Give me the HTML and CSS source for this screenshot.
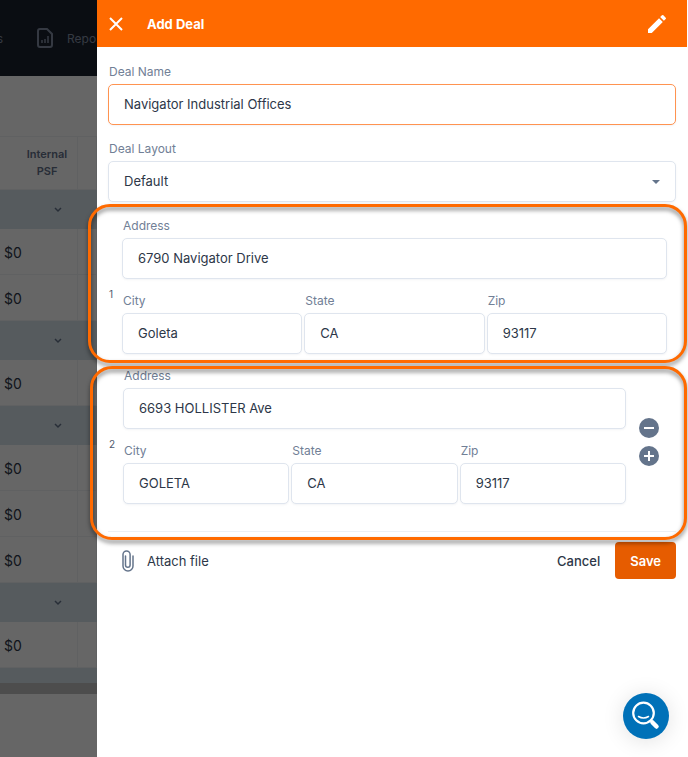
FILE: index.html
```
<!DOCTYPE html>
<html lang="en">
<head>
  <meta charset="UTF-8" />
  <meta name="viewport" content="width=device-width, initial-scale=1.0"/>
  <title>Add Deal</title>
  <link rel="stylesheet" href="styles.css">
</head>
<body>

  <!-- Page behind the drawer -->
  <div class="page">
    <nav class="top-nav">
      <a href="#" class="nav-cut">s</a>
      <a href="#" class="nav-link">
        <svg width="16" height="20" viewBox="0 0 16 20" fill="none" stroke="currentColor" stroke-width="2">
          <path d="M3 1h7l5 5v11a2 2 0 0 1-2 2H3a2 2 0 0 1-2-2V3a2 2 0 0 1 2-2z"/>
          <path d="M5 15v-3M8 15v-4M11 15V8" stroke-width="1.5"/>
        </svg>
        Repo
      </a>
    </nav>
    <table class="deals">
      <thead>
        <tr><th>Internal<br>PSF</th><th></th></tr>
      </thead>
      <tbody>
        <tr class="band"><td colspan="2"><svg class="chevron" viewBox="0 0 8 6"><path d="M1 1l3 3 3-3"/></svg></td></tr>
        <tr><td>$0</td><td></td></tr>
        <tr><td>$0</td><td></td></tr>
        <tr class="band"><td colspan="2"><svg class="chevron" viewBox="0 0 8 6"><path d="M1 1l3 3 3-3"/></svg></td></tr>
        <tr><td>$0</td><td></td></tr>
        <tr class="band"><td colspan="2"><svg class="chevron" viewBox="0 0 8 6"><path d="M1 1l3 3 3-3"/></svg></td></tr>
        <tr><td>$0</td><td></td></tr>
        <tr><td>$0</td><td></td></tr>
        <tr><td>$0</td><td></td></tr>
        <tr class="band"><td colspan="2"><svg class="chevron" viewBox="0 0 8 6"><path d="M1 1l3 3 3-3"/></svg></td></tr>
        <tr><td>$0</td><td></td></tr>
      </tbody>
    </table>
    <div class="band-end"></div>
    <div class="scrollbar"></div>
  </div>

  <!-- Add Deal drawer -->
  <main class="drawer">
    <header>
      <button type="button" class="icon-btn" aria-label="Close">
        <svg width="14" height="14" viewBox="0 0 14 14" fill="none" stroke="#fff" stroke-width="2"><path d="M1 1l12 12M13 1L1 13"/></svg>
      </button>
      <h1>Add Deal</h1>
      <button type="button" class="icon-btn" aria-label="Edit">
        <svg width="24" height="24" viewBox="0 0 24 24" fill="#fff"><path d="M3 17.25V21h3.75L17.81 9.94l-3.75-3.75L3 17.25zM20.71 7.04a1 1 0 0 0 0-1.41l-2.34-2.34a1 1 0 0 0-1.41 0l-1.83 1.83 3.75 3.75 1.83-1.83z"/></svg>
      </button>
    </header>

    <form>
      <div class="deal-fields">
        <div class="field">
          <label for="deal-name">Deal Name</label>
          <input type="text" id="deal-name" class="active" value="Navigator Industrial Offices">
        </div>
        <div class="field">
          <label for="deal-layout">Deal Layout</label>
          <select id="deal-layout"><option>Default</option></select>
        </div>
      </div>

      <section class="address first">
        <span class="number">1</span>
        <div class="address-fields">
          <div class="field">
            <label for="address-1">Address</label>
            <input type="text" id="address-1" value="6790 Navigator Drive">
          </div>
          <div class="columns">
            <div class="field">
              <label for="city-1">City</label>
              <input type="text" id="city-1" value="Goleta">
            </div>
            <div class="field">
              <label for="state-1">State</label>
              <input type="text" id="state-1" value="CA">
            </div>
            <div class="field">
              <label for="zip-1">Zip</label>
              <input type="text" id="zip-1" value="93117">
            </div>
          </div>
        </div>
      </section>

      <section class="address second">
        <span class="number">2</span>
        <div class="address-fields">
          <div class="field">
            <label for="address-2">Address</label>
            <input type="text" id="address-2" value="6693 HOLLISTER Ave">
          </div>
          <div class="columns">
            <div class="field">
              <label for="city-2">City</label>
              <input type="text" id="city-2" value="GOLETA">
            </div>
            <div class="field">
              <label for="state-2">State</label>
              <input type="text" id="state-2" value="CA">
            </div>
            <div class="field">
              <label for="zip-2">Zip</label>
              <input type="text" id="zip-2" value="93117">
            </div>
          </div>
        </div>
        <div class="row-actions">
          <button type="button" class="icon-btn" aria-label="Remove address">
            <svg width="20" height="20" viewBox="0 0 20 20"><circle cx="10" cy="10" r="10" fill="#64748b"/><path d="M5 10h10" stroke="#fff" stroke-width="2"/></svg>
          </button>
          <button type="button" class="icon-btn" aria-label="Add address">
            <svg width="20" height="20" viewBox="0 0 20 20"><circle cx="10" cy="10" r="10" fill="#64748b"/><path d="M5 10h10M10 5v10" stroke="#fff" stroke-width="2"/></svg>
          </button>
        </div>
      </section>

      <footer>
        <button type="button" class="attach">
          <svg width="12" height="22" viewBox="0 0 12 22" fill="none" stroke="#64748b" stroke-width="1.5" stroke-linecap="round"><path d="M3.500 6v9a2.300 2.300 0 0 0 4.600 0V4.500a3.500 3.500 0 0 0-7.100 0V16a5 5 0 0 0 10 0V6"/></svg>
          Attach file
        </button>
        <button type="button" class="cancel">Cancel</button>
        <button type="button" class="save">Save</button>
      </footer>
    </form>
  </main>

  <button type="button" class="help" aria-label="Search help">
    <svg width="46" height="46" viewBox="0 0 46 46" fill="none" stroke="#fff" stroke-linecap="round">
      <circle cx="20.500" cy="20" r="10.300" stroke-width="2.200"/>
      <path d="M15.500 23.500q5 3 10 0" stroke-width="1.500"/>
      <path d="M28 28l2 2" stroke-width="2"/>
      <path d="M29.500 29.500l4 4" stroke-width="4.500"/>
    </svg>
  </button>

</body>
</html>
```
FILE: styles.css
```
* {
  box-sizing: border-box;
}

body {
  margin: 0;
  min-height: 100vh;
  display: flex;
  font-family: Inter, 'Liberation Sans', sans-serif;
  font-size: 13px;
  color: #2d3748;
  background: #fff;
}

button {
  border: none;
  background: none;
  padding: 0;
  font: inherit;
  color: inherit;
  cursor: pointer;
}

svg {
  display: block;
  flex: none;
}

/* Page behind the drawer */
.page {
  position: relative;
  width: 97px;
  flex: none;
  overflow: hidden;
  background: #fff;
}

.page::after {
  content: "";
  position: absolute;
  inset: 0;
  background: rgba(0, 0, 0, 0.6);
}

.top-nav {
  display: flex;
  align-items: center;
  gap: 34px;
  height: 76px;
  background: #19222f;
  font-size: 12px;
}

.top-nav a {
  color: #8490a5;
  text-decoration: none;
}

.nav-cut {
  width: 3px;
  display: flex;
  justify-content: flex-end;
}

.top-nav .nav-link {
  display: flex;
  align-items: center;
  gap: 14px;
}

.deals {
  width: 100%;
  margin-top: 60px;
  border-collapse: separate;
  border-spacing: 0;
  table-layout: fixed;
}

.deals th,
.deals td {
  padding: 1px 0 0 4px;
  border-right: 1px solid #f1f3f5;
  border-bottom: 1px solid #f1f3f5;
  text-align: left;
}

.deals th {
  height: 54px;
  padding: 0 0 0 17px;
  border-top: 1px solid #f1f3f5;
  font-size: 11px;
  font-weight: 600;
  line-height: 17px;
  text-align: center;
  color: #64708a;
}

.deals th:first-child {
  width: 78px;
}

.deals td {
  height: 46px;
  font-size: 14px;
}

.deals .band td {
  height: 39px;
  padding-left: 54px;
  border: none;
  background: #d7e4ec;
}

.chevron {
  width: 8px;
  height: 6px;
  fill: none;
  stroke: #64748b;
  stroke-width: 1.5;
}

.band-end {
  height: 15px;
  background: #d7e4ec;
}

.scrollbar {
  height: 11px;
  background: #c1c1c1;
}

/* Drawer */
.drawer {
  flex: 1;
  min-width: 0;
  margin-right: 1px;
}

header {
  display: flex;
  align-items: center;
  height: 47px;
  padding: 0 18px 0 12px;
  background: #ff6a00;
  color: #fff;
}

header h1 {
  flex: 1;
  margin: 0 0 0 24px;
  font-size: 13px;
  font-weight: 700;
}

form {
  padding: 16px 11px 0;
}

.deal-fields {
  display: grid;
  gap: 15px;
}

.field {
  display: grid;
  gap: 3px;
  min-width: 0;
}

label {
  padding-left: 1px;
  font-size: 12px;
  line-height: 18px;
  color: #718096;
}

input,
select {
  width: 100%;
  height: 41px;
  padding: 0 15px 1px;
  border: 1px solid #dfe5ee;
  border-radius: 5px;
  outline: none;
  background: #fff;
  font: inherit;
  color: #2d3748;
  box-shadow: 0 1px 2px rgba(100, 116, 139, 0.08);
}

input.active {
  border-color: #ff9350;
}

select {
  appearance: none;
  background: #fff url("data:image/svg+xml,%3Csvg xmlns='http://www.w3.org/2000/svg' width='8' height='4'%3E%3Cpath d='M0 0h8L4 4z' fill='%2364748b'/%3E%3C/svg%3E") no-repeat right 15px center;
}

.address {
  position: relative;
  display: flex;
  align-items: center;
}

.address.first {
  margin-top: 15px;
  padding-right: 9px;
}

.address.second {
  margin-top: 13px;
}

/* Highlight frames around the address groups */
.address::after {
  content: "";
  position: absolute;
  border: 3px solid #ff6a00;
  border-radius: 22px;
  filter: drop-shadow(0 3px 2px rgba(0, 0, 0, 0.5));
  pointer-events: none;
}

.address.first::after {
  inset: -13px -11px -9px -20px;
}

.address.second::after {
  inset: -1px -11px -36px -18px;
}

.number {
  width: 14px;
  padding: 16px 0 0 1px;
  font-size: 10px;
  line-height: 12px;
  color: #4f5b6d;
}

.second .number {
  width: 15px;
}

.address-fields {
  flex: 1;
  min-width: 0;
  display: grid;
  gap: 13px;
}

.columns {
  display: grid;
  grid-template-columns: repeat(3, 1fr);
  gap: 2px;
}

.row-actions {
  display: grid;
  gap: 8px;
  padding: 12px 17px 0 13px;
}

footer {
  display: flex;
  align-items: center;
  margin-top: 27px;
  padding: 10px 0 0 14px;
  border-top: 1px solid #edf0f4;
}

.attach {
  display: flex;
  align-items: center;
  gap: 13px;
  margin-right: auto;
}

.cancel {
  margin-right: 15px;
  font-weight: 500;
}

.save {
  height: 37px;
  padding: 0 15px;
  border-radius: 4px;
  background: #e65c00;
  font-weight: 600;
  color: #fff;
}

/* Floating help button */
.help {
  position: fixed;
  right: 19px;
  bottom: 18px;
  border-radius: 50%;
  background: #0071b8;
  box-shadow: 0 2px 22px rgba(0, 0, 0, 0.12);
}
```
